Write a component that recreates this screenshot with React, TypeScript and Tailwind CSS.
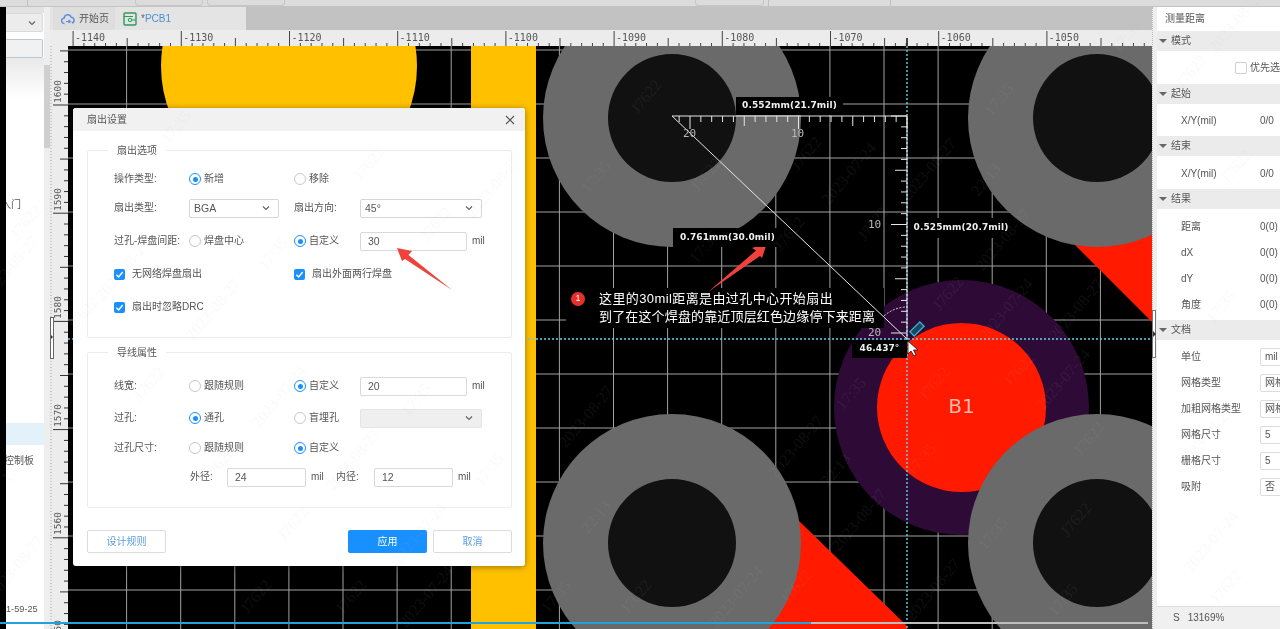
import React from "react";

const cjk = { fontFamily: '"Liberation Sans","Noto Sans CJK SC",sans-serif' };

const WM: [string, number, number][] = [
  ["J7622", 952, 297], ["2023-07-24", 1010, 313], ["2023-08-27", 1080, 313], ["17:35", 855, 397],
  ["J7622", 938, 387], ["J7622", 1023, 373], ["2023-07-24", 1067, 383], ["17:35", 925, 463],
  ["J7622", 1093, 442], ["J7622", 1080, 523], ["17:35", 997, 537], ["17:35", 1067, 603],
  ["2023-08-27", 863, 523], ["2023-08-27", 800, 450], ["2023-08-27", 937, 593], ["22:13", 840, 473],
  ["J7622", 800, 590], ["J7622", 650, 100], ["2023-07-24", 853, 177], ["J7622", 810, 157],
  ["2023-08-27", 933, 173], ["17:35", 1003, 103], ["22:13", 990, 183], ["2023-08-27", 1007, 243],
  ["J7622", 877, 227], ["17:35", 708, 250], ["J7622", 793, 237], ["J7622", 710, 178],
  ["2023-08-27", 497, 190], ["J7622", 373, 167], ["17:35", 277, 257], ["2023-08-27", 127, 273],
  ["J7622", 440, 227], ["2023-08-27", 217, 313], ["J7622", 87, 317], ["J7622", 153, 387],
  ["J7622", 223, 467], ["2023-07-24", 283, 400], ["2023-08-27", 357, 463], ["17:35", 420, 403],
  ["J7622", 297, 527], ["17:35", 493, 473], ["2023-07-24", 423, 537], ["17:35", 180, 130],
  ["2023-08-27", 15, 270], ["J7622", 30, 225], ["17:35", 20, 470], ["2023-08-27", 20, 570],
  ["J7622", 1195, 75], ["17:35", 1225, 310], ["J7622", 1240, 170], ["2023-08-27", 1210, 440],
  ["J7622", 1230, 590], ["2023-07-24", 1215, 545], ["17:35", 600, 180], ["2023-08-27", 590, 420],
  ["J7622", 640, 600], ["22:13", 600, 520], ["17:35", 560, 600], ["J7622", 260, 600], ["J7622", 355, 600],
  ["2023-07-24", 430, 600], ["2023-08-27", 1240, 25], ["17:35", 1130, 40], ["2023-07-24", 740, 600],
];

function Radio({ on, label }: { on?: boolean; label: string }) {
  return (
    <div className="flex items-center gap-[3px]">
      <span className={`flex h-3 w-3 items-center justify-center rounded-full border bg-white ${on ? "border-[#1890ff]" : "border-[#c8c8c8]"}`}>
        {on && <span className="h-[5px] w-[5px] rounded-full bg-[#1890ff]" />}
      </span>
      <span>{label}</span>
    </div>
  );
}

function Check({ label, w }: { label: string; w?: string }) {
  return (
    <div className={`flex items-center gap-[7px] ${w ?? ""}`}>
      <span className="flex h-[11px] w-[11px] items-center justify-center rounded-[2px] bg-[#1890ff]">
        <svg width="9" height="9" viewBox="0 0 10 10"><path d="M1.5 5.2 4 7.8 8.6 2.2" fill="none" stroke="#fff" strokeWidth="1.6" /></svg>
      </span>
      <span>{label}</span>
    </div>
  );
}

function Chevron() {
  return (
    <svg width="8" height="6" viewBox="0 0 8 6"><path d="M1 1.5 4 4.5 7 1.5" fill="none" stroke="#666" strokeWidth="1.2" /></svg>
  );
}

function Select({ value, w, off }: { value?: string; w: string; off?: boolean }) {
  return (
    <div className={`flex h-[19px] items-center justify-between rounded-[2px] border px-[4px] pr-[8px] ${w} ${off ? "border-[#e4e4e4] bg-[#efefef]" : "border-[#d5d5d5] bg-white"}`}>
      <span className="text-[10.5px]">{value}</span>
      <Chevron />
    </div>
  );
}

function Input({ value, w }: { value: string; w: string }) {
  return (
    <div className={`flex h-[19px] items-center rounded-[2px] border border-[#d9d9d9] bg-white pl-[7px] text-[10.5px] ${w}`}>{value}</div>
  );
}

function Row({ label, a, b, c, mt }: { label: string; a: React.ReactNode; b: React.ReactNode; c?: React.ReactNode; mt: string }) {
  return (
    <div className={`flex h-[20px] items-center pl-[26px] ${mt}`}>
      <div className="w-[75px]">{label}</div>
      <div className="w-[105px]">{a}</div>
      <div className="w-[66px]">{b}</div>
      {c}
    </div>
  );
}

function Group({ title, h, pt, children, mt }: { title: string; h: string; pt: string; children: React.ReactNode; mt: string }) {
  return (
    <div className={`relative w-[425px] rounded-[2px] border border-[#ececec] ${h} ${pt} ${mt}`}>
      <span className="absolute left-[20px] top-[-7px] bg-white px-[9px] leading-[14px]">{title}</span>
      {children}
    </div>
  );
}

function Dialog() {
  const mil = <span className="ml-[5px] text-[10px]">mil</span>;
  return (
    <div className="absolute left-[5px] top-[62px] w-[452px] rounded-[3px] bg-white text-[10px] leading-none text-[#555] shadow-[0_1px_6px_rgba(0,0,0,0.4)]" style={cjk}>
      <div className="flex h-[23px] items-center justify-between rounded-t-[3px] bg-[#f1f1f1] pl-[14px] pr-[10px]">
        <span>扇出设置</span>
        <svg width="10" height="10" viewBox="0 0 10 10"><path d="M1 1 9 9M9 1 1 9" stroke="#555" strokeWidth="1.1" /></svg>
      </div>
      <div className="flex flex-col pb-[13px] pl-[14px]">
        <Group title="扇出选项" h="h-[188px]" pt="pt-[18px]" mt="mt-[19px]">
          <Row label="操作类型:" mt="mt-0" a={<Radio on label="新增" />} b={<Radio label="移除" />} />
          <Row label="扇出类型:" mt="mt-[9px]" a={<Select value="BGA" w="w-[90px]" />} b="扇出方向:" c={<Select value="45°" w="w-[122px]" />} />
          <Row label="过孔-焊盘间距:" mt="mt-[13px]" a={<Radio label="焊盘中心" />} b={<Radio on label="自定义" />} c={<div className="flex items-center"><Input value="30" w="w-[107px]" />{mil}</div>} />
          <div className="mt-[13px] flex h-[20px] items-center pl-[26px]">
            <Check label="无网络焊盘扇出" w="w-[180px]" />
            <Check label="扇出外面两行焊盘" />
          </div>
          <div className="mt-[13px] flex h-[20px] items-center pl-[26px]">
            <Check label="扇出时忽略DRC" />
          </div>
        </Group>
        <Group title="导线属性" h="h-[156px]" pt="pt-[23px]" mt="mt-[14px]">
          <Row label="线宽:" mt="mt-0" a={<Radio label="跟随规则" />} b={<Radio on label="自定义" />} c={<div className="flex items-center"><Input value="20" w="w-[107px]" />{mil}</div>} />
          <Row label="过孔:" mt="mt-[12px]" a={<Radio on label="通孔" />} b={<Radio label="盲埋孔" />} c={<Select w="w-[122px]" off />} />
          <Row label="过孔尺寸:" mt="mt-[10px]" a={<Radio label="跟随规则" />} b={<Radio on label="自定义" />} />
          <div className="mt-[9px] flex h-[20px] items-center pl-[102px]">
            <span className="w-[37px]">外径:</span>
            <Input value="24" w="w-[79px]" />
            <span className="ml-[5px] w-[25px] text-[10px]">mil</span>
            <span className="w-[38px]">内径:</span>
            <Input value="12" w="w-[79px]" />
            {mil}
          </div>
        </Group>
        <div className="mt-[22px] flex w-[425px] text-center">
          <div className="flex h-[23px] w-[79px] items-center justify-center rounded-[2px] border border-[#dcdcdc] text-[#5a9fe0]">设计规则</div>
          <div className="ml-auto flex h-[23px] w-[79px] items-center justify-center rounded-[2px] bg-[#1890ff] text-white">应用</div>
          <div className="ml-[6px] flex h-[23px] w-[79px] items-center justify-center rounded-[2px] border border-[#dcdcdc] text-[#5a9fe0]">取消</div>
        </div>
      </div>
    </div>
  );
}

function Board() {
  const vs = Array.from({ length: 20 }, (_, i) => 126.6 + i * 54.1);
  const hs = Array.from({ length: 11 }, (_, i) => 50 + i * 54);
  const rings: [number, number][] = [[672, 118], [1097, 118], [672, 543], [1097, 543]];
  const hx = Array.from({ length: 22 }, (_, k) => k);
  const vy = Array.from({ length: 21 }, (_, k) => k);
  return (
    <svg className="absolute left-0 top-0" width="1084" height="583" viewBox="68 46 1084 583">
      <rect x="68" y="46" width="1084" height="583" fill="#000" />
      {vs.map((x) => <line key={x} x1={x} x2={x} y1="46" y2="629" stroke="#a2a2a2" />)}
      {hs.map((y) => <line key={y} x1="68" x2="1152" y1={y} y2={y} stroke="#a2a2a2" />)}
      <circle cx="289" cy="66" r="128" fill="#ffc000" />
      <rect x="471" y="46" width="65" height="583" fill="#ffc000" />
      <polygon points="760,480 798,520 907,626 907,640 700,640" fill="#ff1a00" />
      <polygon points="1050,220 1152,220 1152,322" fill="#ff1a00" />
      <circle cx="961.5" cy="407.5" r="127.5" fill="#2e0b36" />
      <circle cx="961.5" cy="407.5" r="84.5" fill="#ff1a00" />
      <text x="961.5" y="413" textAnchor="middle" fontSize="20" fill="#f7b9a8" fontFamily="DejaVu Sans">B1</text>
      {rings.map(([x, y]) => (
        <g key={x * y}>
          <circle cx={x} cy={y} r="129" fill="#6a6a6a" />
          <circle cx={x} cy={y} r="64" fill="#111" />
        </g>
      ))}
      <rect x="566" y="288" width="318" height="40" fill="#000" />
      <line x1="907" x2="907" y1="46" y2="629" stroke="#62d4e8" strokeWidth="1.4" strokeDasharray="2 2" />
      <line x1="68" x2="1152" y1="339" y2="339" stroke="#62d4e8" strokeWidth="1.4" strokeDasharray="2 2" />
      <g stroke="#e6e6e6">
        <line x1="672" y1="116" x2="907" y2="339" />
        <line x1="672" y1="116" x2="907" y2="116" />
        <line x1="907" y1="116" x2="907" y2="339" />
        {hx.map((k) => {
          const x = 907 - k * 10.85;
          return <line key={k} x1={x} x2={x} y1="116" y2={116 + (k % 10 === 0 ? 13 : k % 5 === 0 ? 10 : 6)} />;
        })}
        {vy.map((k) => {
          const y = 116 + k * 10.85;
          return <line key={k} y1={y} y2={y} x1="907" x2={907 - (k % 10 === 0 ? 16 : k % 5 === 0 ? 12 : 6)} />;
        })}
      </g>
      <g fontFamily="DejaVu Sans Mono" fontSize="11" fill="#b5b5b5">
        <text x="683" y="137">20</text>
        <text x="791" y="137">10</text>
        <text x="868" y="228">10</text>
        <text x="868" y="336">20</text>
      </g>
      <path d="M884 316 Q893 308 905 307" fill="none" stroke="#d8d8d8" strokeDasharray="2 1.5" />
      <g transform="rotate(-45 917 329)">
        <rect x="910" y="326" width="14" height="6" fill="#174a60" stroke="#3ab4d8" strokeWidth="1.3" />
      </g>
    </svg>
  );
}

function Overlay() {
  return (
    <svg className="pointer-events-none absolute left-0 top-0" width="1084" height="583" viewBox="68 46 1084 583">
      <polygon points="397,248 412,251 408.5,255 452,290 405,259 402,261" fill="#f0423a" />
      <polygon points="767,243 752,248 756,250.5 708,292 760,256 762,258" fill="#f0423a" />
      <path d="M908 341 V354 L911 351 L914 356 L916 355 L913.5 350 L918 350 Z" fill="#fff" stroke="#111" strokeWidth="0.8" />
      <circle cx="578" cy="299" r="7" fill="#e8302b" />
    </svg>
  );
}

function Tag({ t, cls }: { t: string; cls: string }) {
  return (
    <div className={`absolute flex items-center justify-center bg-black font-bold text-[#f0f0f0] ${cls}`} style={{ fontFamily: '"DejaVu Sans",sans-serif', fontSize: 9, letterSpacing: "0.1px" }}>
      {t}
    </div>
  );
}

function TopRuler() {
  const ticks = Array.from({ length: 100 }, (_, k) => k);
  const labels = [-1140, -1130, -1120, -1110, -1100, -1090, -1080, -1070, -1060, -1050];
  return (
    <svg width="1084" height="16" viewBox="68 30 1084 16">
      {ticks.map((k) => {
        const x = 73.1 + k * 10.82;
        if (x > 1152) return null;
        const h = k % 10 === 0 ? 15 : k % 5 === 0 ? 8 : 3;
        return <line key={k} x1={x} x2={x} y1={46 - h} y2="46" stroke="#444" />;
      })}
      <line x1="907" x2="907" y1="38" y2="46" stroke="#111" strokeWidth="1.5" />
      {labels.map((l, i) => (
        <text key={l} x={75 + i * 108.2} y="41" fontSize="10" fill="#555" fontFamily="DejaVu Sans Mono">{l}</text>
      ))}
    </svg>
  );
}

function LeftRuler() {
  const ticks = Array.from({ length: 56 }, (_, k) => k);
  const labels = [1600, 1590, 1580, 1570, 1560, 1550];
  return (
    <svg width="18" height="583" viewBox="50 46 18 583" className="shrink-0">
      <line x1="51" x2="51" y1="46" y2="629" stroke="#aaa" strokeDasharray="1 2" />
      {ticks.map((k) => {
        const y = 50.9 + k * 10.82;
        const w = k % 10 === 5 ? 15 : k % 5 === 0 ? 8 : 4;
        return <line key={k} y1={y} y2={y} x1={68 - w} x2="68" stroke="#333" />;
      })}
      {labels.map((l, i) => (
        <text key={l} transform={`translate(61 ${103 + i * 108}) rotate(-90)`} fontSize="9.5" fill="#555" fontFamily="DejaVu Sans Mono">{l}</text>
      ))}
      <rect x="50.5" y="317.5" width="3" height="41" fill="#fff" stroke="#666" />
      <path d="M51 335 L53 337 L51 339 Z" fill="#333" />
    </svg>
  );
}

function Sec({ title }: { title: string }) {
  return (
    <div className="flex h-[20px] items-center gap-[4px] bg-[#ebebeb] pl-[2px]">
      <span className="h-0 w-0 border-x-[4px] border-t-[4px] border-x-transparent border-t-[#666]" />
      <span>{title}</span>
    </div>
  );
}

function KV({ k, v, box }: { k: string; v: string; box?: boolean }) {
  return (
    <div className="flex h-[26px] items-center pl-[24px]">
      <span className="w-[79px] shrink-0">{k}</span>
      {box ? (
        <span className="flex h-[18px] w-[40px] shrink-0 items-center overflow-hidden rounded-[2px] border border-[#dcdcdc] pl-[4px]">{v}</span>
      ) : (
        <span>{v}</span>
      )}
    </div>
  );
}

function RightPanel() {
  return (
    <div className="relative flex w-[128px] shrink-0 overflow-hidden bg-white text-[10px] leading-none text-[#555]" style={cjk}>
      <div className="w-[5px] shrink-0 border-l border-r-0 border-dotted border-[#bbb] bg-[#eeeeee]" />
      <div className="flex min-w-0 flex-1 flex-col">
        <div className="flex h-[24px] items-center pl-[8px]">测量距离</div>
        <Sec title="模式" />
        <div className="flex h-[33px] items-center pl-[78px]">
          <span className="h-[12px] w-[12px] shrink-0 rounded-[2px] border border-[#cfcfcf]" />
          <span className="ml-[3px] whitespace-nowrap">优先选择</span>
        </div>
        <Sec title="起始" />
        <div className="h-[32px] pt-[4px]"><KV k="X/Y(mil)" v="0/0" /></div>
        <Sec title="结束" />
        <div className="h-[33px] pt-[5px]"><KV k="X/Y(mil)" v="0/0" /></div>
        <Sec title="结果" />
        <div className="h-[111px] pt-[5px]">
          <KV k="距离" v="0(0)" />
          <KV k="dX" v="0(0)" />
          <KV k="dY" v="0(0)" />
          <KV k="角度" v="0(0)" />
        </div>
        <Sec title="文档" />
        <div className="pt-[4px]">
          <KV k="单位" v="mil" box />
          <KV k="网格类型" v="网格线" box />
          <KV k="加粗网格类型" v="网格线" box />
          <KV k="网格尺寸" v="5" box />
          <KV k="栅格尺寸" v="5" box />
          <KV k="吸附" v="否" box />
        </div>
        <div className="mt-auto flex h-[23px] items-center gap-[8px] border-t border-[#dedede] bg-[#f0f0f0] pl-[16px]">
          <span>S</span>
          <span>13169%</span>
        </div>
      </div>
      <div className="absolute left-0 top-[303px] flex h-[48px] w-[4px] items-center border border-[#777] bg-white">
        <span className="h-0 w-0 border-y-[3px] border-l-[3px] border-y-transparent border-l-[#333]" />
      </div>
    </div>
  );
}

function LeftPanel() {
  return (
    <div className="relative flex w-[50px] shrink-0 bg-black text-[10px] leading-none text-[#555]" style={cjk}>
      <div className="ml-[6px] flex flex-1 flex-col overflow-hidden bg-white">
        <div className="h-[6px] shrink-0 bg-[#e2e2e2]" />
        <div className="flex w-[37px] h-[19px] shrink-0 items-center justify-end rounded-r-[2px] border border-l-0 border-[#dadada] bg-[#ececec] pr-[6px]">
          <Chevron />
        </div>
        <div className="mt-[7px] h-[19px] w-[37px] shrink-0 rounded-r-[2px] border border-l-0 border-[#b9c9d6] bg-[#f1f1f1]" />
        <div className="h-[40px] shrink-0 bg-gradient-to-b from-[#e9e9e9] to-white" />
        <div className="-ml-[5px] mt-[102px] whitespace-nowrap">入门</div>
        <div className="mt-[213px] h-[22px] w-[38px] shrink-0 bg-[#e3f1fb]" />
        <div className="-ml-[2px] mt-[11px] whitespace-nowrap">控制板</div>
        <div className="mt-[139px] whitespace-nowrap text-[9.2px]">1-59-25</div>
      </div>
      <div className="absolute left-[44px] top-0 flex h-full w-[6px] flex-col bg-[#eeeeee] pt-[58px]">
        <div className="h-[83px] w-[6px] bg-[#cfcfcf]" />
      </div>
    </div>
  );
}

export default function App() {
  return (
    <div className="relative flex h-[629px] w-[1280px] flex-col overflow-hidden bg-white blur-[0.35px]">
      <div className="flex h-[7px] shrink-0 border-b border-[#c4c4c4] bg-[#dcdcdc]">
        <div className="ml-[27px] h-full w-[108px] border-l border-[#c0c0c0]" />
        <div className="h-full w-[68px] rounded-b border border-t-0 border-[#c6c6c6]" />
        <div className="ml-[4px] h-full w-[78px] rounded-b border border-t-0 border-[#c6c6c6]" />
        <div className="ml-[410px] h-full w-[69px] rounded-b border border-t-0 border-[#c6c6c6]" />
        <div className="ml-[4px] h-full w-[122px] border-l border-[#c0c0c0]" />
        <div className="h-full border-l border-[#c0c0c0]" />
      </div>
      <div className="flex min-h-0 flex-1">
        <LeftPanel />
        <div className="flex w-[1102px] shrink-0 flex-col">
          <div className="flex h-[23px] shrink-0 bg-[#c2c2c2] text-[10px] leading-none text-[#555]" style={cjk}>
            <div className="w-[3px] bg-[#e4e4e4]" />
            <div className="flex w-[62px] items-center gap-[4px] bg-[#dedede] pl-[8px]">
              <svg width="14" height="12" viewBox="0 0 14 12">
                <path d="M3.5 10.5a2.7 2.7 0 0 1-.3-5.4 3.6 3.6 0 0 1 7-.9 3 3 0 0 1 .6 5.9" fill="none" stroke="#5f8fdc" strokeWidth="1.5" />
                <path d="M5 8.5h4M7.5 7 9.5 8.5 7.5 10" fill="none" stroke="#5f8fdc" strokeWidth="1.2" />
              </svg>
              <span>开始页</span>
            </div>
            <div className="flex w-[131px] items-center gap-[4px] bg-[#e4e4e4] pl-[8px]">
              <svg width="14" height="14" viewBox="0 0 14 14">
                <rect x="1" y="1" width="12" height="12" rx="1" fill="none" stroke="#2f9a5a" strokeWidth="1.4" />
                <circle cx="7" cy="8" r="1.7" fill="none" stroke="#2f9a5a" />
                <path d="M1 4.5h9M8.7 8H13" stroke="#2f9a5a" />
              </svg>
              <span className="text-[#4a90d9]"><span className="text-[#666]">*</span>PCB1</span>
            </div>
          </div>
          <div className="flex h-[16px] shrink-0 bg-[#ececec]">
            <div className="w-[18px]" />
            <TopRuler />
          </div>
          <div className="flex min-h-0 flex-1 bg-[#ececec]">
            <LeftRuler />
            <div className="relative h-[583px] w-[1084px] overflow-hidden">
              <Board />
              <Dialog />
              <Overlay />
              <Tag t="0.552mm(21.7mil)" cls="left-[668px] top-[51px] h-[18px] w-[107px]" />
              <Tag t="0.761mm(30.0mil)" cls="left-[605px] top-[182px] h-[19px] w-[109px]" />
              <Tag t="0.525mm(20.7mil)" cls="left-[840px] top-[172px] h-[20px] w-[106px]" />
              <Tag t="46.437°" cls="left-[784px] top-[294px] h-[18px] w-[55px]" />
              <div className="absolute left-[506px] top-[246px] flex h-[14px] w-[8px] items-center justify-center text-[9px] text-white" style={cjk}>1</div>
              <div className="absolute left-[531px] top-[244px] whitespace-nowrap text-[13px] leading-[18px] text-white" style={cjk}>
                <div className="tracking-[0.4px]">这里的30mil距离是由过孔中心开始扇出</div>
                <div className="tracking-[0.15px]">到了在这个焊盘的靠近顶层红色边缘停下来距离</div>
              </div>
            </div>
          </div>
        </div>
        <RightPanel />
      </div>
      <svg className="pointer-events-none absolute left-0 top-0" width="1280" height="629" viewBox="0 0 1280 629">
        {WM.map(([t, x, y], i) => (
          <text key={i} transform={`translate(${x} ${y}) rotate(-50)`} textAnchor="middle" fontSize="16" fill="#c0c0c0" fillOpacity="0.08" fontFamily="Liberation Serif">{t}</text>
        ))}
      </svg>
      <div className="absolute left-0 top-[622px] flex h-[2px] w-full">
        <div className="w-[811px] bg-[#1fa3dc]" />
        <div className="w-[337px] bg-[#bdbdbd]" />
      </div>
    </div>
  );
}
